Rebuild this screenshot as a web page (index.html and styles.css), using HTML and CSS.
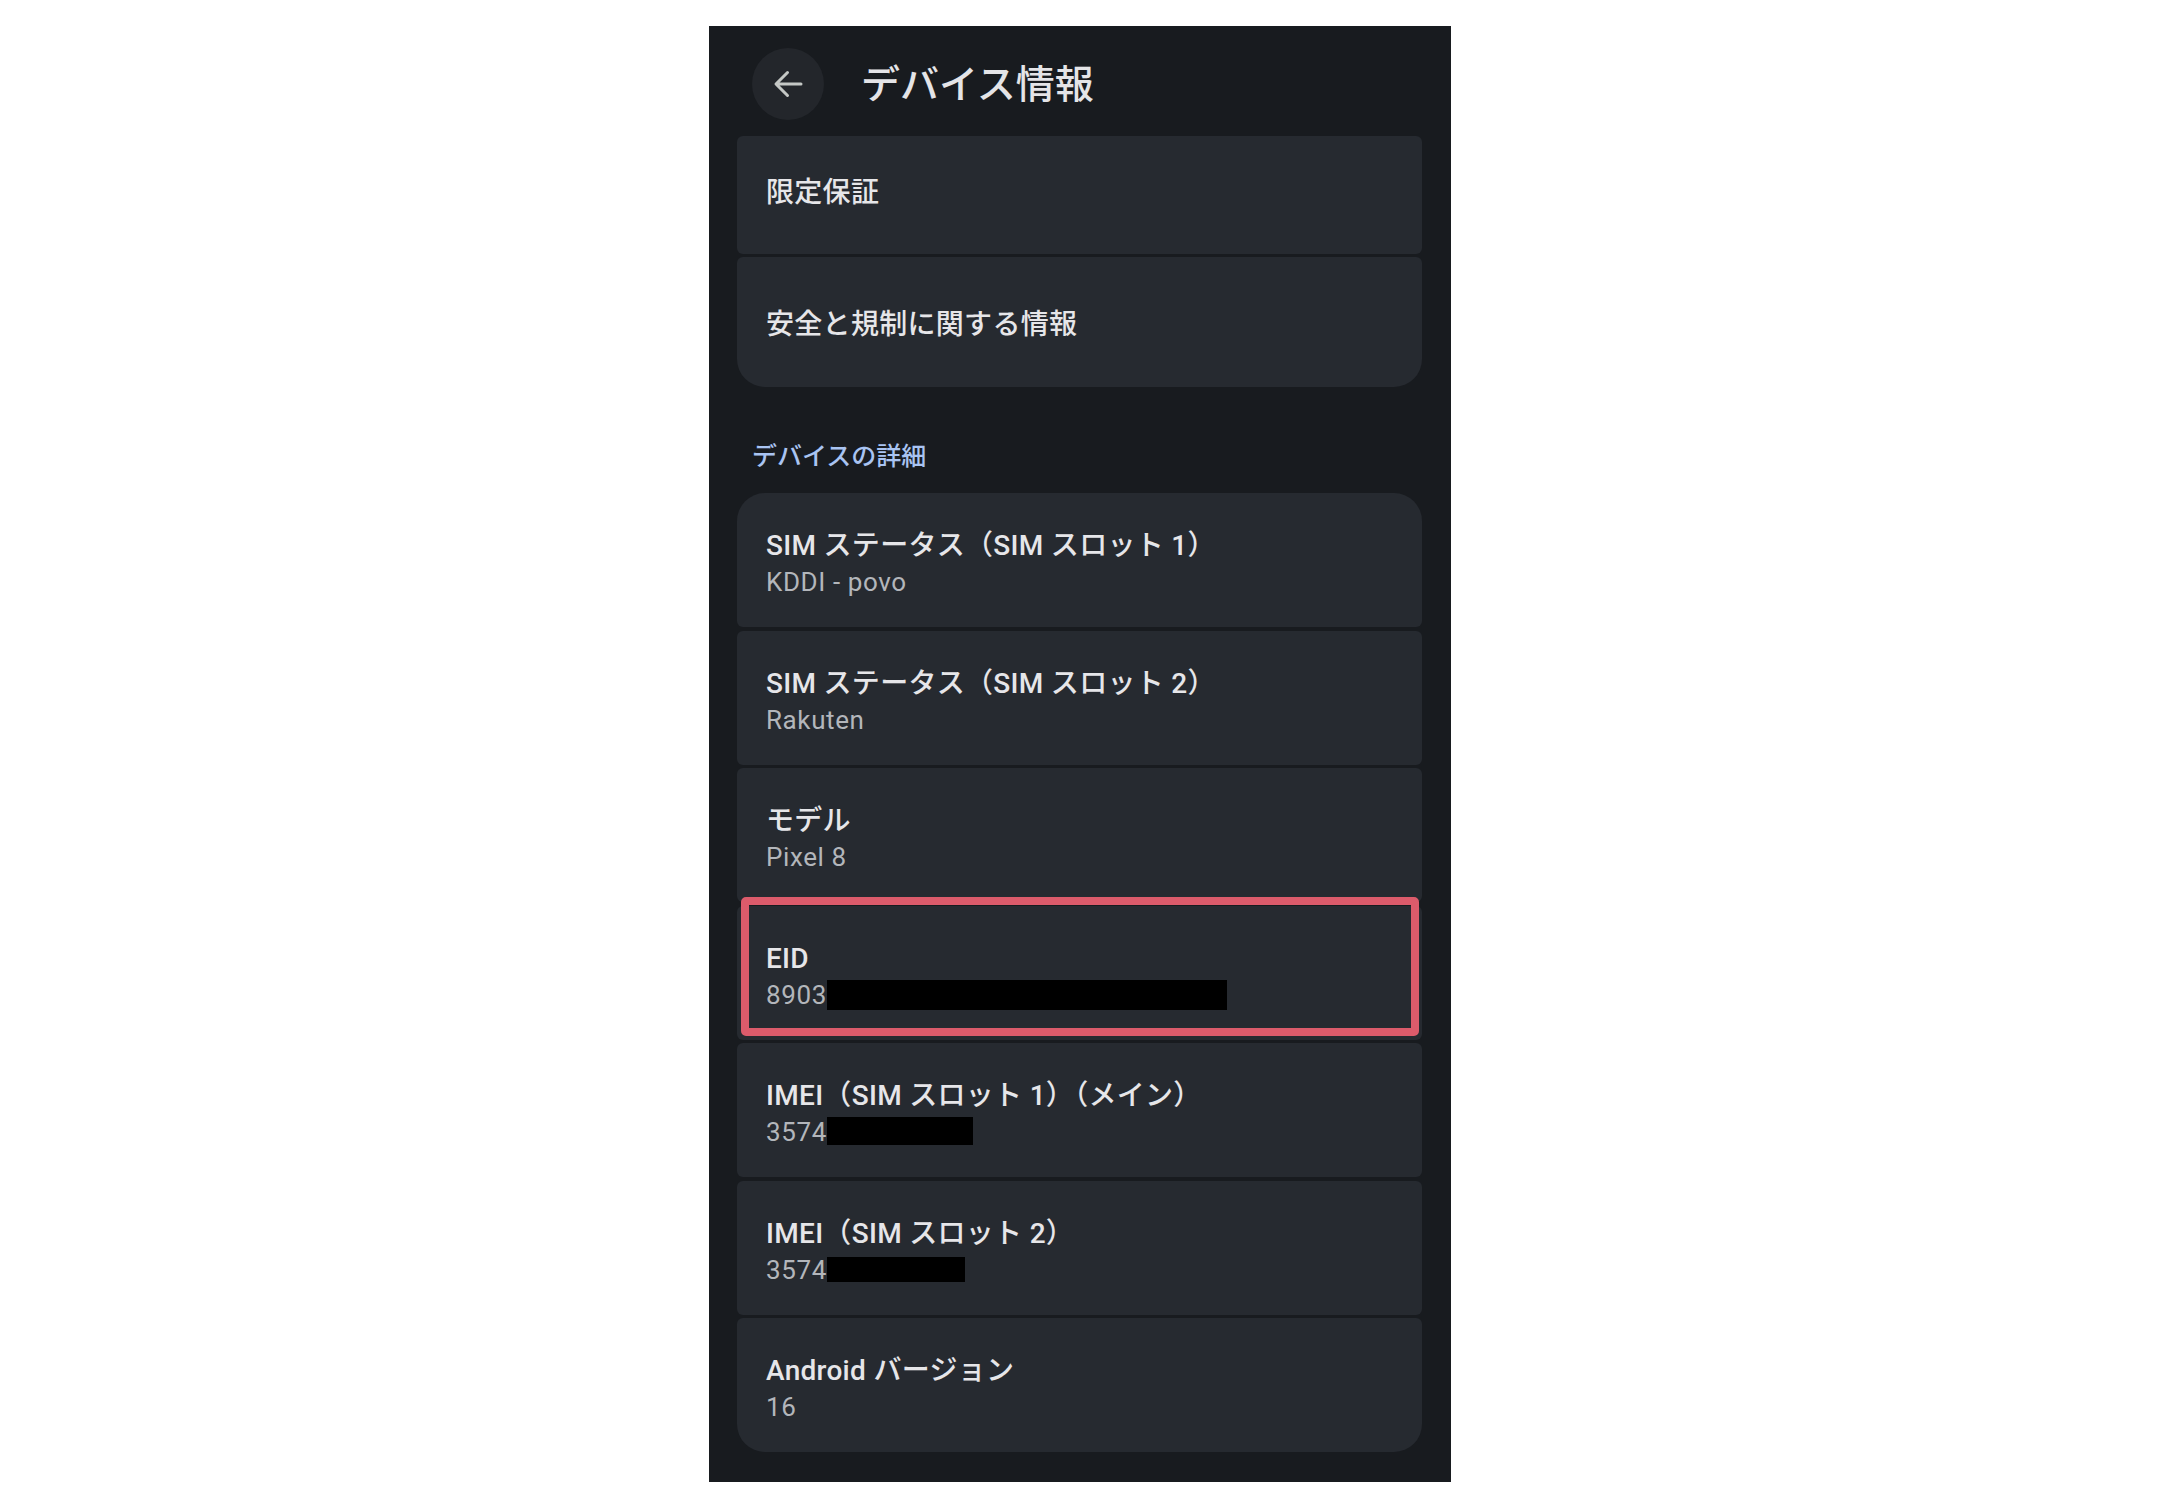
FILE: index.html
```html
<!DOCTYPE html>
<html lang="ja">
<head>
<meta charset="utf-8">
<title>デバイス情報</title>
<link rel="stylesheet" href="styles.css">
</head>
<body>
<div class="phone">
  <header class="appbar">
    <div class="back">
      <svg width="30" height="28" viewBox="0 0 30 28" aria-hidden="true">
        <path d="M28 14H3.5M14.5 2.5L3 14l11.5 11.5" fill="none" stroke="#c4c7c5" stroke-width="3" stroke-linecap="round" stroke-linejoin="round"/>
      </svg>
    </div>
    <h1 class="title">デバイス情報</h1>
  </header>

  <div class="content">
    <div class="group">
      <div class="card card-clipped"><div class="card-title">限定保証</div></div>
      <div class="card card-last card-single"><div class="card-title">安全と規制に関する情報</div></div>
    </div>

    <div class="section-title">デバイスの詳細</div>

    <div class="group details">
      <div class="card card-first">
        <div class="card-title">SIM ステータス（SIM スロット 1）</div>
        <div class="card-sub">KDDI - povo</div>
      </div>
      <div class="card">
        <div class="card-title">SIM ステータス（SIM スロット 2）</div>
        <div class="card-sub">Rakuten</div>
      </div>
      <div class="card">
        <div class="card-title">モデル</div>
        <div class="card-sub">Pixel 8</div>
      </div>
      <div class="card card-marked">
        <div class="card-title">EID</div>
        <div class="card-sub">8903<span class="redact redact-eid"></span></div>
        <div class="highlight"></div>
      </div>
      <div class="card">
        <div class="card-title">IMEI（SIM スロット 1）（メイン）</div>
        <div class="card-sub">3574<span class="redact redact-imei1"></span></div>
      </div>
      <div class="card">
        <div class="card-title">IMEI（SIM スロット 2）</div>
        <div class="card-sub">3574<span class="redact redact-imei2"></span></div>
      </div>
      <div class="card card-last">
        <div class="card-title">Android バージョン</div>
        <div class="card-sub">16</div>
      </div>
    </div>
  </div>
</div>
</body>
</html>
```

FILE: styles.css
```css
html, body {
  margin: 0;
  padding: 0;
  background: #ffffff;
}

body {
  height: 100vh;
  display: flex;
  align-items: center;
  justify-content: center;
  font-family: "Roboto", "Noto Sans CJK JP", sans-serif;
}

.phone {
  width: 742px;
  height: 1456px;
  background: #181b1f;
  overflow: hidden;
  display: flex;
  flex-direction: column;
}

.appbar {
  display: flex;
  align-items: center;
  height: 72px;
  margin-top: 22px;
  padding-left: 43px;
  gap: 37px;
}

.back {
  width: 72px;
  height: 72px;
  border-radius: 50%;
  background: #23262b;
  display: flex;
  align-items: center;
  justify-content: center;
}

.title {
  margin: 0;
  padding-bottom: 6px;
  font-family: "Noto Sans CJK JP", sans-serif;
  font-weight: 500;
  font-size: 39px;
  line-height: 48px;
  color: #e4e4e7;
}

.content {
  margin-top: 16px;
  padding: 0 29px 0 28px;
}

.group {
  display: flex;
  flex-direction: column;
  gap: 3px;
}

.details {
  gap: 3.5px;
}

.card {
  position: relative;
  height: 134px;
  box-sizing: border-box;
  background: #262a30;
  border-radius: 6px;
  padding: 6px 20px 0 29px;
  display: flex;
  flex-direction: column;
  justify-content: center;
}

.card-clipped {
  height: 118px;
  padding-bottom: 10px;
}

.card-single {
  height: 130px;
}

.card-first {
  border-radius: 28px 28px 6px 6px;
}

.card-last {
  border-radius: 6px 6px 28px 28px;
}

.card-title {
  font-size: 28px;
  font-weight: 500;
  letter-spacing: 0.3px;
  line-height: 36px;
  color: #e6e6e9;
  white-space: nowrap;
}

.card-sub {
  margin-top: 2px;
  font-size: 26px;
  letter-spacing: 0.6px;
  line-height: 32px;
  color: #b3b6bb;
  white-space: nowrap;
}

.section-title {
  margin: 50px 0 22px 15px;
  font-family: "Noto Sans CJK JP", sans-serif;
  font-weight: 500;
  font-size: 25px;
  line-height: 34px;
  color: #a9c4f2;
}

.redact {
  display: inline-block;
  vertical-align: top;
  background: #000000;
}

.redact-eid {
  width: 400px;
  height: 30px;
  margin-top: 1px;
}

.redact-imei1 {
  width: 146px;
  height: 28px;
  margin-top: 1px;
}

.redact-imei2 {
  width: 138px;
  height: 25px;
  margin-top: 3px;
}

.highlight {
  position: absolute;
  top: -9px;
  left: 4px;
  right: 3px;
  bottom: 4px;
  border: 8px solid #dc5b6b;
  border-radius: 5px;
  pointer-events: none;
}
```
